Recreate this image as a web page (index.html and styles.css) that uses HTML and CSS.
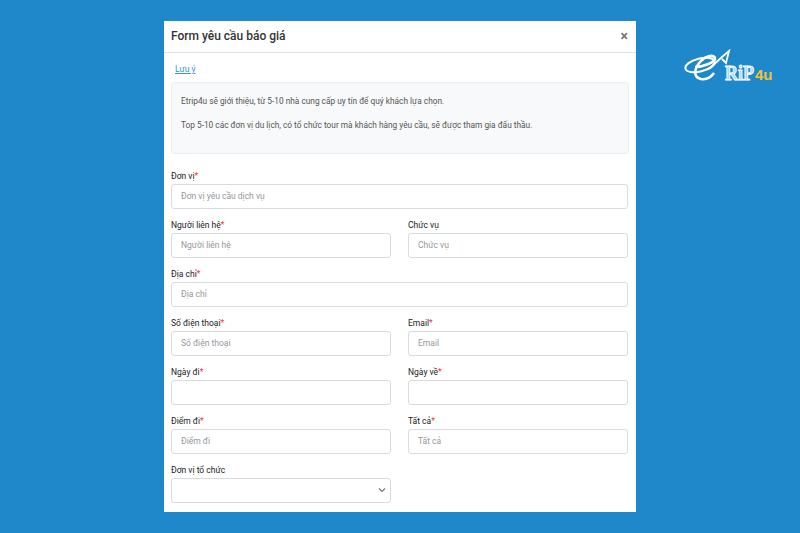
FILE: index.html
```html
<!DOCTYPE html>
<html lang="vi">
<head>
  <meta charset="UTF-8" />
  <meta name="viewport" content="width=device-width, initial-scale=1.0"/>
  <title>Form yêu cầu báo giá</title>
  <link rel="stylesheet" href="styles.css">
</head>
<body>
  <div class="logo">
    <svg width="92" height="36" viewBox="0 0 92 36" fill="none">
      <ellipse cx="17" cy="16" rx="15" ry="6.5" transform="rotate(-14 17 16)" stroke="#fff" stroke-width="2"/>
      <path d="M12 18 C20 18 33 13 32 9 C30 5 22 7 17 13 C11 20 10 28 18 30 C23 31 28 28 31 24" stroke="#fff" stroke-width="2.6"/>
      <path d="M26 20 L39 8 L46 2 L43 14 L39 10" stroke="#fff" stroke-width="1.8"/>
      <text transform="translate(42 31) scale(.82 1)" class="logo-rip">RiP</text>
      <text x="72" y="31" class="logo-4u">4u</text>
    </svg>
  </div>

  <div class="modal">
    <div class="modal-header">
      <h5>Form yêu cầu báo giá</h5>
      <span class="close">×</span>
    </div>
    <div class="modal-body">
      <a href="#" class="note-link">Lưu ý</a>
      <div class="note-box">
        <p>Etrip4u sẽ giới thiệu, từ 5-10 nhà cung cấp uy tín để quý khách lựa chọn.</p>
        <p>Top 5-10 các đơn vị du lịch, có tổ chức tour mà khách hàng yêu cầu, sẽ được tham gia đấu thầu.</p>
      </div>
      <form class="form-grid">
        <div class="field full">
          <label>Đơn vị<span class="req">*</span></label>
          <input type="text" placeholder="Đơn vị yêu cầu dịch vụ">
        </div>
        <div class="field">
          <label>Người liên hệ<span class="req">*</span></label>
          <input type="text" placeholder="Người liên hệ">
        </div>
        <div class="field">
          <label>Chức vụ</label>
          <input type="text" placeholder="Chức vụ">
        </div>
        <div class="field full">
          <label>Địa chỉ<span class="req">*</span></label>
          <input type="text" placeholder="Địa chỉ">
        </div>
        <div class="field">
          <label>Số điện thoại<span class="req">*</span></label>
          <input type="text" placeholder="Số điện thoại">
        </div>
        <div class="field">
          <label>Email<span class="req">*</span></label>
          <input type="text" placeholder="Email">
        </div>
        <div class="field">
          <label>Ngày đi<span class="req">*</span></label>
          <input type="text">
        </div>
        <div class="field">
          <label>Ngày về<span class="req">*</span></label>
          <input type="text">
        </div>
        <div class="field">
          <label>Điểm đi<span class="req">*</span></label>
          <input type="text" placeholder="Điểm đi">
        </div>
        <div class="field">
          <label>Tất cả<span class="req">*</span></label>
          <input type="text" placeholder="Tất cả">
        </div>
        <div class="field">
          <label>Đơn vị tổ chức</label>
          <div class="select-wrap">
            <select></select>
            <svg class="chevron" width="8" height="6" viewBox="0 0 8 6" fill="none"><path d="M1 1.5 L4 4.5 L7 1.5" stroke="#777" stroke-width="1.2"/></svg>
          </div>
        </div>
      </form>
    </div>
  </div>
</body>
</html>
```

FILE: styles.css
```css
* { margin: 0; padding: 0; box-sizing: border-box; }
body {
  font-family: Roboto, 'Liberation Sans', sans-serif;
  background: #1f88cb;
  color: #333;
  height: 533px;
  overflow: hidden;
  position: relative;
}

/* Logo */
.logo { position: absolute; left: 683px; top: 49px; }
.logo-rip { font: bold 22px 'Liberation Serif', serif; fill: #a9d8f2; stroke: #fff; stroke-width: 1; }
.logo-4u { font: bold 15px 'Liberation Sans', sans-serif; fill: #f2c230; }

/* Modal */
.modal {
  width: 472px; height: 491px;
  margin: 21px 0 0 164px;
  background: #fff;
  overflow: hidden;
  position: absolute;
  top: 0; left: 0;
}
.modal-header {
  display: flex; justify-content: space-between; align-items: center;
  height: 32px; padding: 0 7px 2px;
  border-bottom: 1px solid #dee2e6;
}
.modal-header h5 { font-size: 12px; font-weight: 500; color: #333; }
.close { font-size: 14px; font-weight: 700; color: #777; margin-right: 1px; }
.modal-body { padding: 10px 7px 0; }
.note-link { display: block; margin-left: 4px; font-size: 8.5px; line-height: 13px; color: #2f95ea; text-decoration: underline; }
.note-box {
  height: 72px; margin-top: 6px;
  padding: 12px 9px;
  background: #f8f9fa;
  border: 1px solid #eceef0;
  border-radius: 3px;
  font-size: 8.3px; line-height: 13px; color: #555;
}
.note-box p { margin-bottom: 11px; }

/* Form */
.form-grid {
  display: grid;
  grid-template-columns: 220px 220px;
  column-gap: 17px;
  row-gap: 10px;
  margin-top: 15.5px;
}
.field.full { grid-column: 1 / 3; }
.field label { display: block; font-size: 8.5px; line-height: 13px; margin-bottom: 1.5px; color: #222; font-weight: 400; }
.req { color: #e33; }
.field input, .field select {
  display: block; width: 100%; height: 24.5px;
  padding: 0 9px;
  border: 1px solid #d8dbdf;
  border-radius: 3px;
  background: #fff;
  font-family: inherit; font-size: 8.5px; color: #555;
  appearance: none;
}
.field input::placeholder { color: #94989d; opacity: 1; }
.select-wrap { position: relative; }
.chevron { position: absolute; right: 5px; top: 9px; }
```
